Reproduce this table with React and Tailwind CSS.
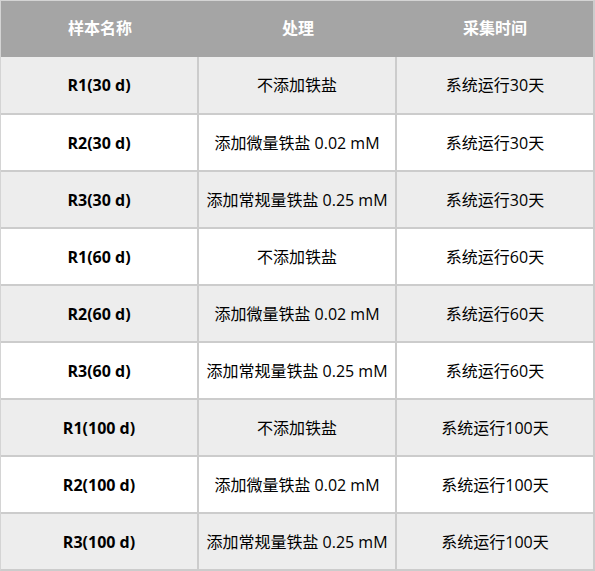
const rows = [
  ["R1(30 d)", "不添加铁盐", "系统运行30天"],
  ["R2(30 d)", "添加微量铁盐 0.02 mM", "系统运行30天"],
  ["R3(30 d)", "添加常规量铁盐 0.25 mM", "系统运行30天"],
  ["R1(60 d)", "不添加铁盐", "系统运行60天"],
  ["R2(60 d)", "添加微量铁盐 0.02 mM", "系统运行60天"],
  ["R3(60 d)", "添加常规量铁盐 0.25 mM", "系统运行60天"],
  ["R1(100 d)", "不添加铁盐", "系统运行100天"],
  ["R2(100 d)", "添加微量铁盐 0.02 mM", "系统运行100天"],
  ["R3(100 d)", "添加常规量铁盐 0.25 mM", "系统运行100天"],
];

export default function App() {
  return (
    <div
      className="w-[595px] h-[571px] bg-white text-[16px] text-black"
      style={{ fontFamily: '"Open Sans", "Noto Sans CJK SC", sans-serif' }}
    >
      <div className="border-t border-l border-[#d4d4d4] border-r-2 border-r-[#cccccc] border-b-2 border-b-[#cccccc]">
        <div className="flex h-[56px] bg-[#a5a5a5] text-white font-bold items-center pb-[2px]">
          <div className="w-[198px] text-center">样本名称</div>
          <div className="w-[198px] text-center">处理</div>
          <div className="flex-1 text-center">采集时间</div>
        </div>
        {rows.map((r, i) => (
          <div
            key={i}
            className={`flex ${i === 0 ? "h-[56px]" : "h-[57px]"} ${i % 2 === 0 ? "bg-[#ededed]" : "bg-white"} ${i === 0 ? "" : "border-t-2 border-[#cccccc]"}`}
          >
            <div className="w-[196px] flex items-center justify-center font-bold">{r[0]}</div>
            <div className="w-[2px] bg-[#cccccc]" />
            <div className="w-[196px] flex items-center justify-center">{r[1]}</div>
            <div className="w-[2px] bg-[#cccccc]" />
            <div className="flex-1 flex items-center justify-center">{r[2]}</div>
          </div>
        ))}
      </div>
    </div>
  );
}
